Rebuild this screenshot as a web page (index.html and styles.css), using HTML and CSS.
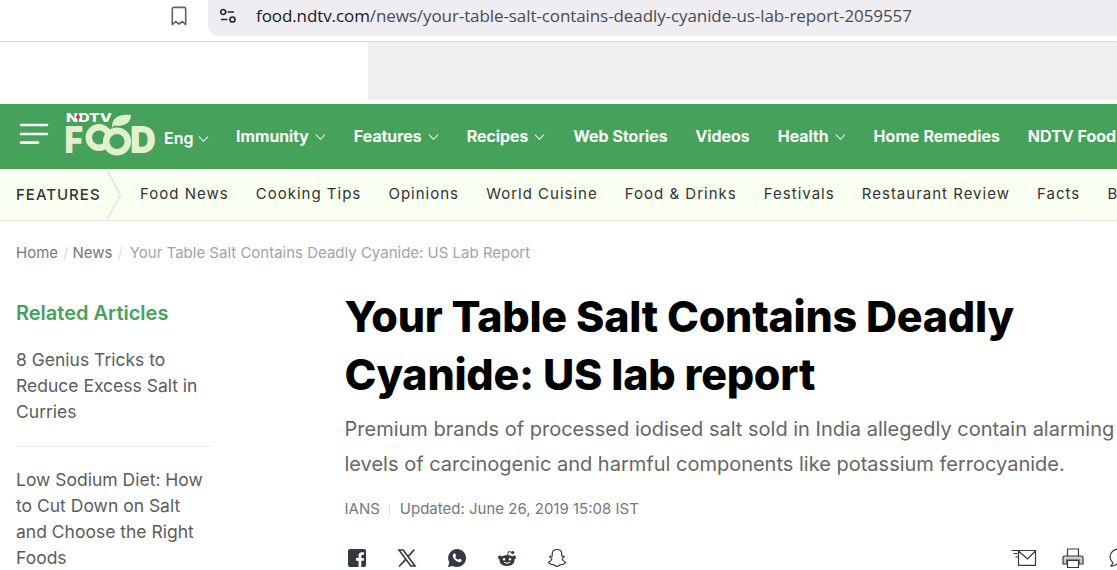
FILE: index.html
```html
<!DOCTYPE html>
<html lang="en">
<head>
    <meta charset="UTF-8">
    <meta name="viewport" content="width=device-width, initial-scale=1.0">
    <title>Your Table Salt Contains Deadly Cyanide: US Lab Report</title>
    <link rel="stylesheet" href="styles.css">
</head>
<body>
    <div class="toolbar">
        <svg class="bookmark" width="16" height="20" viewBox="0 0 16 20" fill="none" stroke="#5f6368" stroke-width="1.6"><path d="M1.300 3a1.600 1.600 0 0 1 1.600-1.600h10.200a1.600 1.600 0 0 1 1.600 1.600v15.700L11.400 15.500 8 18 4.600 15.500 1.300 18.700z" stroke-linejoin="round"/></svg>
        <div class="address">
            <svg width="18" height="16" viewBox="0 0 18 16" fill="none" stroke="#28282c" stroke-width="1.700"><circle cx="4.200" cy="4" r="2.500"/><path d="M8.500 4H15M2 11.500h6.500"/><circle cx="13.500" cy="11.500" r="2.500"/></svg>
            <span class="url"><b>food.ndtv.com</b>/news/your-table-salt-contains-deadly-cyanide-us-lab-report-2059557</span>
        </div>
    </div>
    <div class="ad"></div>

    <header class="header">
        <svg class="menu" width="30" height="24" viewBox="0 0 30 24" stroke="#fff" stroke-width="2.600" stroke-linecap="round"><path d="M2 3h26M2 12h26M2 20.600h17"/></svg>
        <svg class="logo" width="92" height="46" viewBox="0 0 92 46">
            <text class="logo-ndtv" x="1" y="10.500" textLength="46" lengthAdjust="spacingAndGlyphs">NDTV</text>
            <path d="M10.500 6l2.500-2.500 2.500 2.500-2.500 2.500z" fill="#e3262e"/>
            <text class="logo-food" x="-.500" y="41.500" textLength="18.500" lengthAdjust="spacingAndGlyphs">F</text>
            <text class="logo-food" x="65" y="41.500" textLength="26" lengthAdjust="spacingAndGlyphs">D</text>
            <circle cx="34" cy="26.500" r="10.200" fill="none" stroke="#e2f0d0" stroke-width="6.500"/>
            <circle cx="52" cy="30.500" r="10.800" fill="#46a15b" stroke="#e2f0d0" stroke-width="6.500"/>
            <path d="M47 15C48 6 54 3 66 4C66 12 59 16 49 14.500L47 17z" fill="#e2f0d0"/>
        </svg>
        <div class="lang">Eng <svg class="chev" viewBox="0 0 12 8"><path d="M1 1.500l5 5 5-5"/></svg></div>
        <nav class="nav">
            <a>Immunity<svg class="chev" viewBox="0 0 12 8"><path d="M1 1.500l5 5 5-5"/></svg></a>
            <a>Features<svg class="chev" viewBox="0 0 12 8"><path d="M1 1.500l5 5 5-5"/></svg></a>
            <a>Recipes<svg class="chev" viewBox="0 0 12 8"><path d="M1 1.500l5 5 5-5"/></svg></a>
            <a>Web Stories</a>
            <a>Videos</a>
            <a>Health<svg class="chev" viewBox="0 0 12 8"><path d="M1 1.500l5 5 5-5"/></svg></a>
            <a>Home Remedies</a>
            <a>NDTV Food</a>
        </nav>
    </header>

    <div class="subnav">
        <span class="subnav-title">FEATURES</span>
        <svg class="arrow" width="16" height="51" viewBox="0 0 16 51" fill="none" stroke="#e0e5d8" stroke-width="1.500"><path d="M.8 1L14.500 26 .8 51"/></svg>
        <nav class="subnav-links">
            <a>Food News</a>
            <a>Cooking Tips</a>
            <a>Opinions</a>
            <a>World Cuisine</a>
            <a>Food &amp; Drinks</a>
            <a>Festivals</a>
            <a>Restaurant Review</a>
            <a>Facts</a>
            <a>B</a>
        </nav>
    </div>

    <div class="breadcrumb">
        <a>Home</a><i>/</i><a>News</a><i>/</i><span>Your Table Salt Contains Deadly Cyanide: US Lab Report</span>
    </div>

    <div class="content">
        <aside class="sidebar">
            <h2>Related Articles</h2>
            <p>8 Genius Tricks to Reduce Excess Salt in Curries</p>
            <p>Low Sodium Diet: How to Cut Down on Salt and Choose the Right Foods</p>
        </aside>
        <main class="article">
            <h1>Your Table Salt Contains Deadly<br>Cyanide: US lab report</h1>
            <p class="summary">Premium brands of processed iodised salt sold in India allegedly contain alarming<br>levels of carcinogenic and harmful components like potassium ferrocyanide.</p>
            <div class="byline"><span>IANS</span><span class="date">Updated: June 26, 2019 15:08 IST</span></div>
            <div class="share">
                <div class="share-group">
                    <svg width="20" height="20" viewBox="0 0 20 20"><path fill="#333941" d="M3 1h14a2 2 0 0 1 2 2v14a2 2 0 0 1-2 2h-2.700v-6.300h2.300l.4-2.700h-2.700V8.300c0-.8.4-1.500 1.600-1.500h1.200V4.500s-1.100-.2-2.100-.2c-2.200 0-3.500 1.300-3.500 3.700v2H9v2.700h2.500V19H3a2 2 0 0 1-2-2V3a2 2 0 0 1 2-2z"/></svg>
                    <svg width="20" height="20" viewBox="0 0 20 20" fill="none" stroke="#333941"><path stroke-width="1.600" d="M2 2h4.200l11.800 16h-4.200z"/><path stroke-width="1.700" d="M17.300 1.500L11 8.700M8.700 11.300L2 18.500"/></svg>
                    <svg width="20" height="20" viewBox="0 0 20 20"><path fill="#333941" d="M10 1a9 9 0 1 1-4.300 16.900L1 19l1.300-4.600A9 9 0 0 1 10 1z"/><path fill="#fff" d="M7 5.500c.3-.3 1-.3 1.200.2l.8 1.800c.1.500-.6 1.100-.8 1.500.7 1.400 1.700 2.200 3.100 2.800.4-.3.9-1.200 1.300-1.100l2 1c.5.300-.1 1.600-.6 2-2.100 1.700-7.800-1.900-8.200-5.800-.1-1 .5-1.900 1.200-2.400z"/></svg>
                    <svg width="20" height="20" viewBox="0 0 20 20"><g fill="#333941"><circle cx="3" cy="9.500" r="2"/><circle cx="17" cy="9.500" r="2"/><ellipse cx="10" cy="12.500" rx="7.500" ry="5.500"/><circle cx="15.700" cy="4.500" r="1.600"/></g><path d="M10.500 7.500l1-4 4 1" fill="none" stroke="#333941"/><g fill="#fff"><circle cx="7" cy="11.300" r="1.200"/><circle cx="13" cy="11.300" r="1.200"/></g><path d="M7 14.300q3 2 6 0" fill="none" stroke="#fff"/></svg>
                    <svg width="20" height="20" viewBox="0 0 20 20"><path fill="none" stroke="#333941" stroke-width="1.200" stroke-linejoin="round" d="M10 1.500c-3.200 0-4.800 2-4.800 4.700v2C4.300 8.500 3 7.700 2.700 8.700c-.2.900 2.500 1.200 2.200 2.200-.5 1.700-1.700 2.800-3.500 3.400.2 1.300 2.300 1 2.500 2 .7.700 2-.1 3 .5.900.6 1.600 1.600 3.100 1.600s2.200-1 3.100-1.600c1-.6 2.300.2 3-.5.200-1 2.300-.7 2.500-2-1.800-.6-3-1.700-3.500-3.400-.3-1 2.400-1.300 2.200-2.200-.3-1-1.600-.2-2.500-.5v-2c0-2.700-1.600-4.700-4.800-4.700z"/></svg>
                </div>
                <div class="share-group share-right">
                    <svg width="26" height="20" viewBox="0 0 26 20" fill="none" stroke="#333941" stroke-width="1.200"><path d="M.5 2.500h24v14.800h-17V3M2.500 5.500h4M4.500 9h2.500M7.500 3l9 8 8-8"/></svg>
                    <svg width="22" height="20" viewBox="0 0 22 20" fill="none" stroke="#333941" stroke-width="1.200"><path d="M5.500 8V1h11v7"/><path fill="#c9ccd0" d="M2.500 8h17a1.500 1.500 0 0 1 1.500 1.500v6.500h-4v-4H5v4H1V9.500A1.500 1.500 0 0 1 2.500 8z"/><path fill="#fff" d="M5.500 12.500h11v7h-11z"/></svg>
                    <svg width="20" height="20" viewBox="0 0 20 20" fill="none" stroke="#333941" stroke-width="1.200"><path d="M10 1C5 1 1 4.300 1 8.500c0 3 1.500 5 3 6.500l-2 3c3 .2 5-1 6-2h2c5 0 9-3.300 9-7.500S15 1 10 1z"/></svg>
                </div>
            </div>
        </main>
    </div>
</body>
</html>
```
FILE: styles.css
```css
* {
    box-sizing: border-box;
}
body {
    margin: 0;
    height: 570px;
    overflow: hidden;
    background: #fff;
    font-family: Inter, sans-serif;
    white-space: nowrap;
}
svg {
    display: block;
    flex: none;
}
.toolbar {
    display: flex;
    height: 42px;
    border-bottom: 1px solid #dadadd;
    padding-left: 171px;
}
.bookmark {
    margin: 6px 21px 0 0;
}
.address {
    flex: 1;
    height: 36px;
    padding: 0 0 5px 11px;
    background: #ededf2;
    border-radius: 0 0 0 10px;
    display: flex;
    align-items: center;
    gap: 19px;
}
.url {
    font: 17px "Open Sans", "Noto Sans", sans-serif;
    letter-spacing: -0.09px;
    color: #4b4b52;
}
.url b {
    font-weight: 400;
    color: #18181b;
}
.ad {
    height: 58px;
    margin: 0 0 4px 368px;
    background: #f0f0f0;
}
.header {
    height: 65px;
    background: #46a15b;
    color: #fff;
    display: flex;
    align-items: center;
    padding-bottom: 1px;
    font-size: 16px;
    font-weight: 600;
}
.menu {
    margin: 0 16px 5px 19px;
}
.logo {
    margin-bottom: 5px;
    overflow: visible;
}
.logo-ndtv {
    font: 800 12px Inter, sans-serif;
    fill: #fff;
}
.logo-food {
    font: 900 37px Inter, sans-serif;
    fill: #e2f0d0;
}
.lang {
    display: flex;
    align-items: center;
    width: 72px;
    margin: 3px 0 0 7px;
}
.lang .chev {
    margin-left: 5px;
}
.nav {
    display: flex;
    gap: 28px;
    letter-spacing: 0.05px;
    -webkit-text-stroke: 0.2px #fff;
}
.nav a {
    display: flex;
    align-items: center;
}
.chev {
    width: 11px;
    height: 8px;
    margin: 2px 0 0 6px;
    fill: none;
    stroke: #fff;
    stroke-width: 1.1;
}
.subnav {
    height: 52px;
    background: #f9fff1;
    border-bottom: 1px solid #ebeee6;
    display: flex;
    align-items: center;
    padding-left: 16px;
    font-size: 15px;
    letter-spacing: 1px;
    color: #333;
}
.subnav-title {
    flex: none;
    width: 90px;
    font-weight: 500;
}
.arrow {
    margin-right: 18px;
}
.subnav-links {
    display: flex;
    gap: 27.15px;
    padding-bottom: 3px;
}
.breadcrumb {
    display: flex;
    margin: 22px 0 0 16px;
    font-size: 15px;
    line-height: 20px;
    color: #777;
}
.breadcrumb i {
    font-style: normal;
    color: #ddd;
    margin: 0 4px 0 5px;
}
.breadcrumb span {
    color: #a3a3a3;
    margin-left: 3px;
}
.content {
    display: flex;
    padding: 24px 0 0 16px;
}
.sidebar {
    flex: none;
    width: 196px;
    margin-right: 132.5px;
}
.sidebar h2 {
    margin: 13px 0 21px;
    font-size: 20px;
    font-weight: 600;
    line-height: 26px;
    color: #46a15b;
}
.sidebar p {
    margin: 0;
    font-size: 17.5px;
    line-height: 26px;
    color: #5c5c5c;
    white-space: normal;
}
.sidebar p + p {
    margin-top: 21px;
    padding-top: 20px;
    border-top: 1px solid #ebebeb;
}
.article {
    flex: none;
}
.article h1 {
    margin: 0;
    font-size: 43px;
    font-weight: 800;
    letter-spacing: -0.27px;
    line-height: 58px;
    color: #000;
}
.summary {
    margin: 9px 0 0;
    font-size: 20px;
    line-height: 35px;
    color: #666;
}
.byline {
    display: flex;
    align-items: center;
    margin-top: 17px;
    font-size: 15px;
    line-height: 20px;
    color: #777;
}
.date {
    margin-left: 9px;
    padding-left: 11px;
    background: linear-gradient(#ddd, #ddd) left center / 1px 10px no-repeat;
}
.share {
    display: flex;
    margin-top: 29px;
    padding-left: 2px;
}
.share-group {
    display: flex;
    gap: 30px;
}
.share-right {
    margin-left: 444px;
    gap: 25px;
}
```
